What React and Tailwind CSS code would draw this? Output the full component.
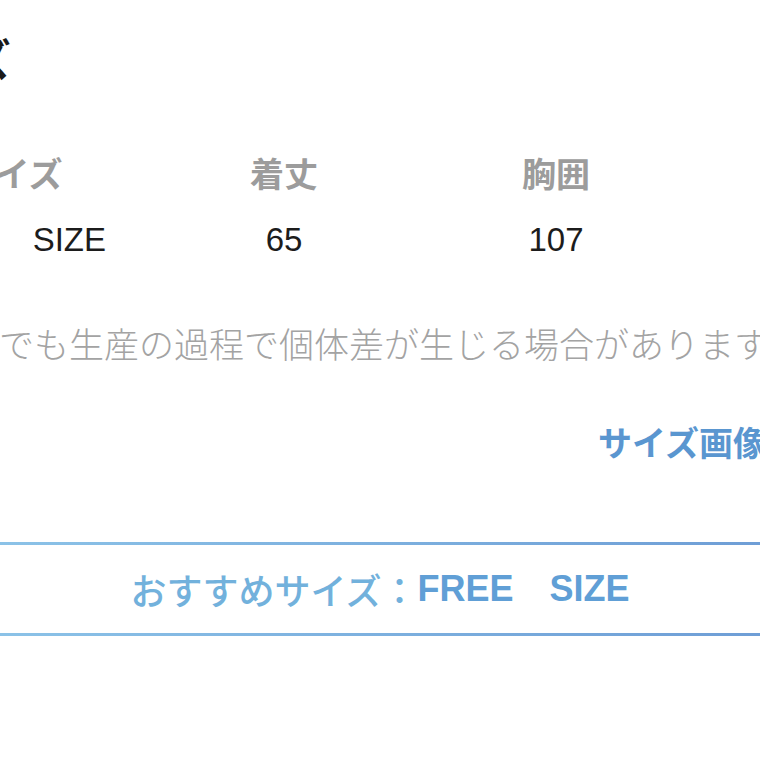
/**
 * SizeChart
 * Cropped size table with recommended-size banner
 */

const FONT = { fontFamily: '"Liberation Sans", "Noto Sans CJK JP", sans-serif' };
const JP = { fontFamily: '"Noto Sans CJK JP", "Liberation Sans", sans-serif' };

export default function App() {
  const columns = [
    { label: '着丈', value: '65' },
    { label: '胸囲', value: '107' },
    { label: '肩幅', value: '50' },
  ];

  return (
    <div className="w-[760px] h-[760px] overflow-hidden bg-white" style={FONT}>
      <div className="ml-[-124px] w-[1140px] flex flex-col">
        {/* Heading */}
        <h2 className="pt-[30px] pl-[4px] h-[140px] text-[44px] leading-[56px] font-bold text-[#1a1a1a]" style={JP}>
          サイズ
        </h2>

        {/* Table */}
        <div className="grid grid-cols-[272px_272px_272px_272px]">
          <div className="h-[64px] flex items-center justify-center text-[34px] font-bold text-[#9c9c9c]" style={JP}>
            サイズ
          </div>
          {columns.map((col) => (
            <div key={col.label} className="h-[64px] flex items-center justify-center text-[34px] font-bold text-[#9c9c9c]" style={JP}>
              {col.label}
            </div>
          ))}
          <div className="h-[72px] flex items-center justify-end gap-[40px] pr-[42px] text-[33px] text-[#1c1c1c]">
            <span>FREE</span>
            <span>SIZE</span>
          </div>
          {columns.map((col) => (
            <div key={col.label + 'v'} className="h-[72px] flex items-center justify-center text-[33px] text-[#1c1c1c]">
              {col.value}
            </div>
          ))}
        </div>

        {/* Note */}
        <p className="mt-[42px] ml-[-86px] h-[50px] leading-[50px] text-[35px] font-light text-[#a3a3a3] whitespace-nowrap" style={JP}>
          ※同じサイズでも生産の過程で個体差が生じる場合があります。
        </p>

        {/* Link */}
        <a className="mt-[49px] pl-[722px] h-[50px] leading-[50px] text-[34px] font-bold text-[#5a96d0] whitespace-nowrap" style={JP}>
          サイズ画像を見る
        </a>

        {/* Recommended size */}
        <div className="mt-[75px] w-[1008px] flex flex-col">
          <div className="h-[3px] bg-linear-to-r from-[#90c8ea] to-[#6a98d3]" />
          <div className="h-[88px] flex items-center justify-center text-[36px] whitespace-pre">
            <span className="font-medium text-[#72b1dc]" style={JP}>おすすめサイズ：</span>
            <span className="font-bold text-[#609fd6]">FREE　SIZE</span>
          </div>
          <div className="h-[3px] bg-linear-to-r from-[#90c8ea] to-[#6a98d3]" />
        </div>
      </div>
    </div>
  );
}
